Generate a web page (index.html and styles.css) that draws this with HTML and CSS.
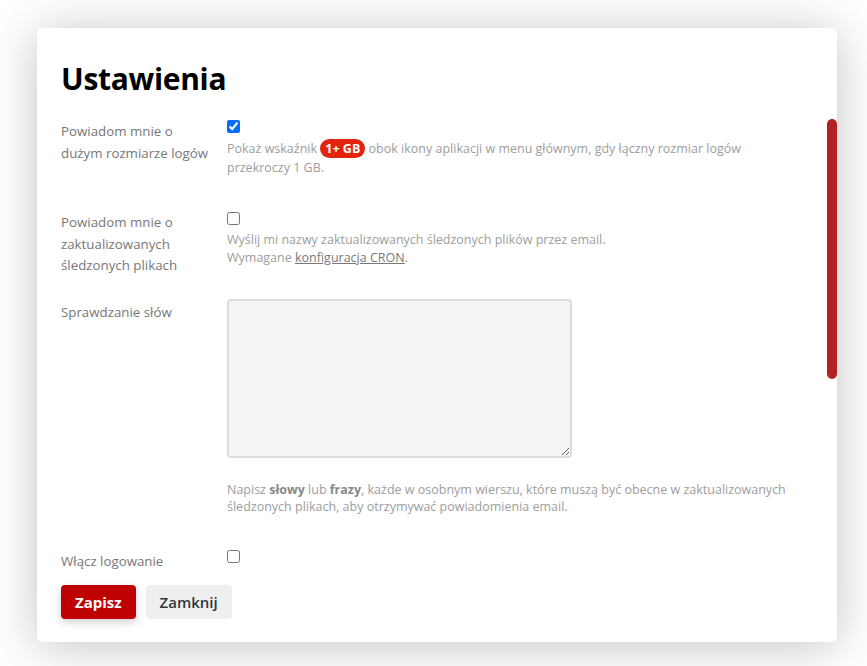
FILE: index.html
```html
<!DOCTYPE html>
<html lang="pl">
<head>
<meta charset="utf-8">
<title>Ustawienia</title>
<link rel="stylesheet" href="styles.css">
</head>
<body>
<div class="dialog">
  <h1 class="title">Ustawienia</h1>
  <div class="scroll">
    <div class="form">
      <div class="row row-1">
        <div class="label">Powiadom mnie o dużym rozmiarze logów</div>
        <div class="control">
          <input type="checkbox" class="check" checked>
          <p class="desc">Pokaż wskaźnik <span class="badge">1+ GB</span> obok ikony aplikacji w menu głównym, gdy łączny rozmiar logów przekroczy 1 GB.</p>
        </div>
      </div>
      <div class="row row-2">
        <div class="label">Powiadom mnie o zaktualizowanych śledzonych plikach</div>
        <div class="control">
          <input type="checkbox" class="check">
          <p class="desc">Wyślij mi nazwy zaktualizowanych śledzonych plików przez email.<br>Wymagane <a href="#" class="link">konfiguracja CRON</a>.</p>
        </div>
      </div>
      <div class="row row-3">
        <div class="label label-pad">Sprawdzanie słów</div>
        <div class="control">
          <textarea class="area"></textarea>
          <p class="desc help">Napisz <b>słowy</b> lub <b>frazy</b>, każde w osobnym wierszu, które muszą być obecne w zaktualizowanych śledzonych plikach, aby otrzymywać powiadomienia email.</p>
        </div>
      </div>
      <div class="row row-4">
        <div class="label">Włącz logowanie</div>
        <div class="control">
          <input type="checkbox" class="check">
        </div>
      </div>
    </div>
  </div>
  <div class="scroll-thumb"></div>
  <div class="footer">
    <button class="btn btn-primary">Zapisz</button>
    <button class="btn btn-secondary">Zamknij</button>
  </div>
</div>
</body>
</html>
```
FILE: styles.css
```css
html, body {
  margin: 0;
  padding: 0;
  background: #ffffff;
}
body {
  padding: 28px 30px 24px 37px;
  font-family: "Open Sans", "Noto Sans", sans-serif;
}
.dialog {
  position: relative;
  width: 800px;
  height: 614px;
  background: #fff;
  border-radius: 5px;
  box-shadow: 0 4px 50px rgba(0, 0, 0, 0.24);
  display: flex;
  flex-direction: column;
  box-sizing: border-box;
  padding: 24px 0 23px 0;
}
.title {
  margin: 0 24px 0 24px;
  font-size: 30px;
  line-height: 54px;
  font-weight: 700;
  color: #000;
  letter-spacing: -0.3px;
}
.scroll {
  margin-top: 13px;
  height: 450px;
  overflow: hidden;
  padding-left: 24px;
}
.scroll-thumb {
  position: absolute;
  right: 0;
  top: 91px;
  width: 10px;
  height: 260px;
  background: #b22222;
  border-radius: 5px;
}
.form {
  padding-top: 1px;
}
.row {
  display: flex;
  gap: 14px;
}
.row-1 { margin-bottom: 35px; }
.row-2 { margin-bottom: 22.5px; }
.row-3 { margin-bottom: 35px; }
.label {
  width: 152px;
  flex: none;
  font-size: 13.3px;
  line-height: 22px;
  color: #777;
}
.row-2 .label { line-height: 21.5px; }
.label-pad { padding-top: 2px; }
.control {
  width: 560px;
}
.check {
  display: block;
  margin: 0;
  width: 13px;
  height: 13px;
  accent-color: #0a6cff;
}
.desc {
  margin: 6px 0 0 0;
  font-size: 12.5px;
  line-height: 19px;
  color: #9d9d9d;
}
.row-2 .desc { line-height: 18px; }
.badge {
  display: inline-block;
  background: #e2240f;
  color: #fff;
  font-weight: 700;
  font-size: 12.5px;
  line-height: 19px;
  padding: 0 5px;
  border-radius: 10px;
}
.link {
  color: #777;
  text-decoration: underline;
}
.area {
  display: block;
  width: 345px;
  height: 159px;
  box-sizing: border-box;
  border: 2px solid #dcdcdc;
  border-radius: 4px;
  background: #f5f5f5;
  margin: 0;
  resize: vertical;
}
.help {
  margin-top: 23px;
  line-height: 17px;
}
.help b {
  color: #888;
}
.footer {
  margin-top: 16px;
  padding-left: 24px;
  display: flex;
  gap: 10px;
}
.btn {
  height: 34px;
  border: none;
  border-radius: 4px;
  font-family: "Open Sans", "Noto Sans", sans-serif;
  font-size: 15px;
  font-weight: 600;
  padding: 0 14px;
  cursor: pointer;
}
.btn-primary {
  background: #bf0000;
  color: #fff;
  font-weight: 700;
  box-shadow: 0 3px 8px rgba(0, 0, 0, 0.2);
}
.btn-secondary {
  background: #efefef;
  color: #2f3542;
}
```
